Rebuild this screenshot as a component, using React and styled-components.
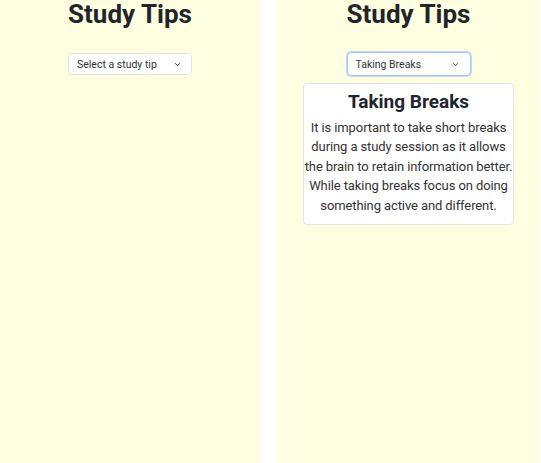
import React, { useState } from 'react'
import styled, { createGlobalStyle } from 'styled-components'

const GlobalStyle = createGlobalStyle`
    html, body {
        margin: 0;
        padding: 0;
        background: #ffffff;
        font-family: Roboto, 'Liberation Sans', sans-serif;
    }
`

const tips = {
    breaks: {
        label: 'Taking Breaks',
        text: 'It is important to take short breaks during a study session as it allows the brain to retain information better. While taking breaks focus on doing something active and different.',
    },
}

function Chevron() {
    return (
        <svg width="9" height="9" viewBox="0 0 24 24" fill="none" stroke="#444" strokeWidth="2.6" strokeLinecap="round" strokeLinejoin="round">
            <path d="M6 9l6 6 6-6" />
        </svg>
    )
}

function StudyTips({ selected }) {
    const [tip] = useState(selected)
    const current = tips[tip]

    return (
        <Panel>
            <Title>Study Tips</Title>
            <Select focused={!!current}>
                <span>{current ? current.label : 'Select a study tip'}</span>
                <Chevron />
            </Select>
            {current && (
                <Card>
                    <CardTitle>{current.label}</CardTitle>
                    <CardText>{current.text}</CardText>
                </Card>
            )}
        </Panel>
    )
}

function App() {
    return (
        <>
            <GlobalStyle />
            <Page>
                <StudyTips selected={null} />
                <StudyTips selected="breaks" />
            </Page>
        </>
    )
}

const Page = styled.div`
    display: grid;
    grid-template-columns: 260px 263px;
    gap: 17px;
    height: 463px;
`

const Panel = styled.div`
    background: #fefee0;
    display: flex;
    flex-direction: column;
    align-items: center;
`

const Title = styled.h1`
    margin: 0;
    font-size: 26px;
    line-height: 28px;
    font-weight: 700;
    color: #212529;
`

const Select = styled.div`
    box-sizing: border-box;
    margin-top: ${(p) => (p.focused ? '24px' : '25px')};
    width: 124px;
    height: ${(p) => (p.focused ? '24px' : '22px')};
    display: flex;
    align-items: center;
    justify-content: space-between;
    padding: ${(p) => (p.focused ? '0 10px 0 8px' : '0 9px 0 8px')};
    background: #ffffff;
    border: 1px solid ${(p) => (p.focused ? '#9ec5f0' : '#e3e3e3')};
    box-shadow: ${(p) => (p.focused ? '0 0 0 1px #c7dcf2' : 'none')};
    border-radius: 4px;
    font-size: 10.5px;
    color: #333;
`

const Card = styled.div`
    box-sizing: border-box;
    margin-top: 7px;
    width: 211px;
    background: #ffffff;
    border: 1px solid #e4e4e4;
    border-radius: 4px;
    padding: 6px 0 9px;
    text-align: center;
`

const CardTitle = styled.h2`
    margin: 0 0 4px;
    font-size: 19px;
    line-height: 24px;
    font-weight: 700;
    color: #212529;
`

const CardText = styled.p`
    margin: 0;
    font-size: 13px;
    line-height: 19.4px;
    letter-spacing: -0.1px;
    color: #333;
`

export default App
